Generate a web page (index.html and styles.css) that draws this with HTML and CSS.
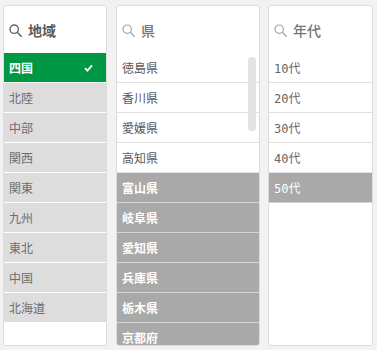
FILE: index.html
```html
<!DOCTYPE html>
<html lang="ja">
<head>
<meta charset="utf-8">
<link rel="stylesheet" href="styles.css">
</head>
<body>
<div class="board">
  <div class="panel p1">
    <div class="head">
      <svg class="icon dark" width="13" height="13" viewBox="0 0 13 13"><circle cx="5.2" cy="5.2" r="4.2" fill="none" stroke="currentColor" stroke-width="1.4"/><path d="M8.3 8.3 L12.2 12.2" stroke="currentColor" stroke-width="1.6" stroke-linecap="round"/></svg>
      <span class="title strong">地域</span>
    </div>
    <div class="list">
      <div class="row sel">四国<svg class="check" width="9" height="8" viewBox="0 0 9 8"><path d="M1 4.2 L3.4 6.6 L8 1.4" fill="none" stroke="#fff" stroke-width="1.8"/></svg></div>
      <div class="row alt">北陸</div>
      <div class="row alt">中部</div>
      <div class="row alt">関西</div>
      <div class="row alt">関東</div>
      <div class="row alt">九州</div>
      <div class="row alt">東北</div>
      <div class="row alt">中国</div>
      <div class="row alt">北海道</div>
    </div>
  </div>
  <div class="panel p2">
    <div class="head">
      <svg class="icon" width="13" height="13" viewBox="0 0 13 13"><circle cx="5.2" cy="5.2" r="4.2" fill="none" stroke="currentColor" stroke-width="1.2"/><path d="M8.3 8.3 L12.2 12.2" stroke="currentColor" stroke-width="1.4" stroke-linecap="round"/></svg>
      <span class="title">県</span>
    </div>
    <div class="list">
      <div class="row">徳島県</div>
      <div class="row">香川県</div>
      <div class="row">愛媛県</div>
      <div class="row">高知県</div>
      <div class="row ex">富山県</div>
      <div class="row ex">岐阜県</div>
      <div class="row ex">愛知県</div>
      <div class="row ex">兵庫県</div>
      <div class="row ex">栃木県</div>
      <div class="row ex">京都府</div>
    </div>
    <div class="scroll"></div>
  </div>
  <div class="panel p3">
    <div class="head">
      <svg class="icon" width="13" height="13" viewBox="0 0 13 13"><circle cx="5.2" cy="5.2" r="4.2" fill="none" stroke="currentColor" stroke-width="1.2"/><path d="M8.3 8.3 L12.2 12.2" stroke="currentColor" stroke-width="1.4" stroke-linecap="round"/></svg>
      <span class="title">年代</span>
    </div>
    <div class="list">
      <div class="row num">10代</div>
      <div class="row num">20代</div>
      <div class="row num">30代</div>
      <div class="row num">40代</div>
      <div class="row num ex">50代</div>
    </div>
  </div>
</div>
</body>
</html>
```
FILE: styles.css
```css
html, body {
  margin: 0;
  padding: 0;
  background: #f2f2f2;
}
body {
  font-family: "Noto Sans CJK JP", "Noto Sans", sans-serif;
}
.board {
  display: flex;
  gap: 9px;
  padding: 5px 4px 4px 3px;
  height: 341px;
}
.panel {
  position: relative;
  background: #fff;
  border: 1px solid #dcdcdc;
  border-radius: 3px;
  overflow: hidden;
  box-sizing: border-box;
  height: 341px;
  display: flex;
  flex-direction: column;
}
.p1 { width: 104px; }
.p2 { width: 144px; }
.p3 { width: 105px; margin-left: -1px; }
.head {
  height: 47px;
  flex: none;
  display: flex;
  align-items: center;
  gap: 6px;
  padding-left: 5px;
  box-sizing: border-box;
}
.icon {
  color: #a6a6a6;
  margin-top: 1px;
}
.icon.dark { color: #666; }
.title {
  font-size: 14px;
  color: #757575;
  font-weight: 500;
}
.title.strong {
  color: #595959;
  font-weight: 700;
}
.list {
  display: flex;
  flex-direction: column;
}
.row {
  height: 29px;
  border-bottom: 1px solid #e0e0e0;
  display: flex;
  align-items: center;
  justify-content: space-between;
  padding: 0 13px 0 5px;
  font-size: 12px;
  color: #595959;
  flex: none;
}
.row.sel {
  background: #009845;
  color: #fff;
  font-weight: 700;
  border-bottom-color: #fff;
}
.row.alt {
  background: #dddddd;
  color: #6e6e6e;
  border-bottom-color: #fff;
}
.row.ex {
  background: #a9a9a9;
  color: #fff;
  font-weight: 700;
  border-bottom-color: #d4d4d4;
}
.row.num {
  font-family: "DejaVu Sans Mono", "Noto Sans CJK JP", monospace;
  font-size: 12px;
  font-weight: 400;
  color: #666;
}
.row.num.ex {
  color: #fff;
  font-weight: 400;
}
.check { margin-top: 1px; }
.scroll {
  position: absolute;
  right: 3px;
  top: 51px;
  width: 8px;
  height: 74px;
  border-radius: 4px;
  background: #e3e3e3;
}
```
